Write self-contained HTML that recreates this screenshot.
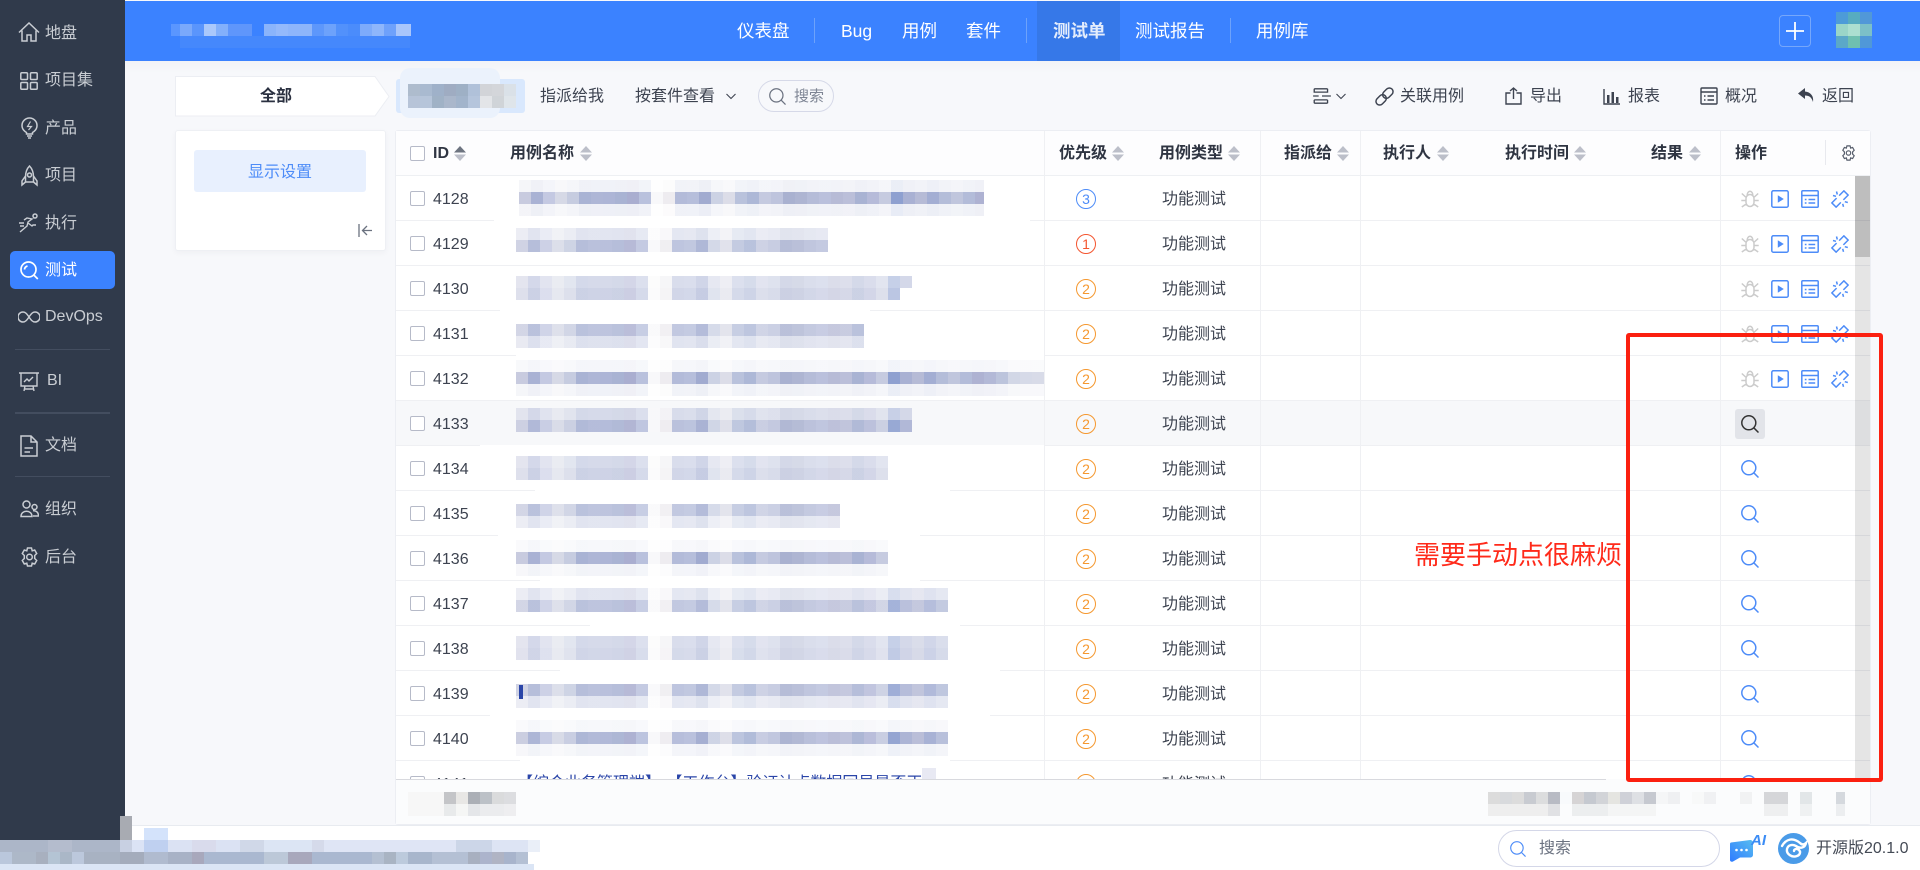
<!DOCTYPE html>
<html lang="zh-CN"><head><meta charset="utf-8"><title>测试单</title>
<style>
*{box-sizing:border-box}
html,body{margin:0;padding:0;width:1920px;height:870px;overflow:hidden;background:#f7f8fb;font-family:"Liberation Sans","Noto Sans CJK SC",sans-serif;font-size:16px;color:#3d4350}
.t{position:absolute;white-space:nowrap;line-height:20px;height:20px}
.a{position:absolute}
.s{color:#c9cdd3;left:45px}
.n{color:#fff;font-size:17.5px;top:21px}
.h{font-weight:700;color:#2f3542;top:144px}
.m{position:absolute;height:12px;background-image:linear-gradient(90deg,#c8cbdf 0 12px,#a9b2d4 0 24px,#c4c9e2 0 36px,#d6d9e6 0 48px,#c6cce0 0 60px,#a9b3d4 0 72px,#aeb6d6 0 84px,#adb5d6 0 96px,#a9b3d3 0 108px,#aaaed0 0 120px,#b9c1dd 0 132px,#f8f8fa 0 144px,#eeecf0 0 156px,#b3bbd9 0 168px,#b6bedb 0 180px,#a1abd0 0 192px,#ccd2e4 0 204px,#dcdde8 0 216px,#b9c2dc 0 228px,#adb8d7 0 240px,#c5cae0 0 252px,#bec4dd 0 264px,#a9b1d0 0 276px,#aeb5d2 0 288px,#b5bcd8 0 300px,#bac0dc 0 312px,#b7bbd6 0 324px,#bbbfd9 0 336px,#a9b3d3 0 348px,#b6bbd9 0 360px,#c6cbe0 0 372px,#8ea0d0 0 384px,#a9b1d3 0 396px,#b6bbd6 0 408px,#a3aed3 0 420px,#b4bdd9 0 432px,#c0c6dd 0 444px,#b3bcd9 0 456px,#aeb2d2 0 468px,#b3b9d7 0 480px,#bcc4dc 0 492px,#d2d7e6 0 504px,#d6dae8 0 516px,#d8dbe8 0 528px)}
.row{position:absolute;left:396px;width:1474px;height:45px;border-bottom:1px solid #eff0f3}
.cb{position:absolute;left:14px;top:15px;width:15px;height:15px;border:1px solid #b6bac8;border-radius:2px;background:#fff}
.id{position:absolute;left:37px;top:14px;line-height:20px;color:#3d4350}
.p{position:absolute;left:680px;top:13px;width:20px;height:20px;border-radius:50%;border:1px solid #f5982f;color:#f5982f;font-size:14px;line-height:18px;text-align:center;font-family:"Liberation Sans",sans-serif}
.ty{position:absolute;left:766px;top:14px;line-height:20px;color:#3d4350}
.ic{position:absolute;top:14px;width:18px;height:18px;fill:none;stroke:#4d8cf8;stroke-width:1.5}
.ib{stroke:#cbcbcb}
.q{position:absolute;left:1345px;top:14px;width:18px;height:18px;fill:none;stroke:#4d8cf8;stroke-width:1.5}
.ln{position:absolute;width:1px;background:#eff0f3}
.w{position:absolute;height:1px;background:#fff}
.tool{fill:none;stroke:#3d4350;stroke-width:1.4;position:absolute;width:18px;height:18px;top:87px}
.side{fill:none;stroke:#c9cdd3;stroke-width:1.5;position:absolute}
</style></head><body>

<svg width="0" height="0" style="position:absolute">
<defs>
<symbol id="bug" viewBox="0 0 18 18"><path d="M5 8.500a4 4 0 0 1 8 0v4a4 4 0 0 1-8 0zM6.200 5.300a2.800 4 0 0 1 5.600 0M.8 3.500l4.400 4M17.200 3.500l-4.400 4M.3 10.500H5M17.700 10.500H13M.8 17l4.400-3M17.200 17l-4.400-3"/></symbol>
<symbol id="play" viewBox="0 0 18 18"><rect x=".8" y=".8" width="16.400" height="16.400" rx="1.500"/><path d="M6.800 5.300L12.800 9l-6 3.700z" fill="#4d8cf8" stroke="none"/></symbol>
<symbol id="list" viewBox="0 0 18 18"><rect x=".8" y=".8" width="16.400" height="16.400" rx="1"/><path d="M.8 5.500h16.400M3.800 9.500h1.700M7.500 9.500h6.700M3.800 13h1.700M7.500 13h6.700"/></symbol>
<symbol id="unl" viewBox="0 0 18 18"><g transform="rotate(-45 9 9)"><path d="M7.200 6H.5v6h6.700M10.800 6h6.700v6h-6.700"/></g><path d="M2 5.500l3 .8M5.500 1.500l.8 3M12.500 16.800l-.8-3M16.800 12.500l-3-.8"/></symbol>
<symbol id="mag" viewBox="0 0 18 18"><circle cx="7.800" cy="7.800" r="7"/><path d="M12.800 12.800L17.500 17.500"/></symbol>
<symbol id="sort" viewBox="0 0 12 15"><path d="M6 0l6 6.500H0z"/><path d="M0 8.500h12L6 15z"/></symbol>
</defs>
</svg>

<!-- Top nav -->
<div class="a" style="left:125px;top:1px;width:1795px;height:60px;background:#3b82ff"></div>
<div class="a" style="left:125px;top:61px;width:1795px;height:12px;background:linear-gradient(#f2f3f7,#f7f8fb)"></div>
<div class="a" style="left:171px;top:24px;width:240px;height:12px;background:linear-gradient(90deg,#5a96ff 0 9px,#7aa9fb 0 21px,#5a95fc 0 33px,#aac8fb 0 45px,#83b0fb 0 57px,#5f96fb 0 81px,#3b82ff 0 93px,#8ab4fb 0 105px,#94b9fb 0 117px,#8eb5fb 0 129px,#8db5fa 0 141px,#5d97fb 0 153px,#6da2fb 0 165px,#5291fb 0 177px,#4b8cfb 0 189px,#7dabfb 0 201px,#8eb6fb 0 213px,#6ea1fb 0 225px,#a9c6fb 0 240px)"></div>
<div class="a" style="left:180px;top:36px;width:230px;height:12px;background:#4588fc"></div>
<div class="a" style="left:1037px;top:1px;width:83px;height:60px;background:#3678e8"></div>
<div class="a" style="left:814px;top:18px;width:1px;height:25px;background:#6da2fb"></div>
<div class="a" style="left:1026px;top:18px;width:1px;height:25px;background:#6da2fb"></div>
<div class="a" style="left:1230px;top:18px;width:1px;height:25px;background:#6da2fb"></div>
<div class="t n" style="left:737px">仪表盘</div>
<div class="t n" style="left:841px">Bug</div>
<div class="t n" style="left:902px">用例</div>
<div class="t n" style="left:966px">套件</div>
<div class="t n" style="left:1053px;font-weight:700;color:#e4edfc">测试单</div>
<div class="t n" style="left:1135px">测试报告</div>
<div class="t n" style="left:1256px">用例库</div>
<div class="a" style="left:1779px;top:15px;width:32px;height:32px;border:1px solid #76a7fb;border-radius:4px"></div>
<svg class="a" style="left:1786px;top:22px" width="18" height="18"><path d="M9 0v18M0 9h18" stroke="#fff" stroke-width="1.800"/></svg>
<div class="a" style="left:1836px;top:12px;width:36px;height:12px;background:linear-gradient(90deg,#4d9bd8 0 12px,#57acc0 0 24px,#5198d8 0 36px)"></div>
<div class="a" style="left:1836px;top:24px;width:36px;height:12px;background:linear-gradient(90deg,#9ad5c8 0 12px,#acdfd0 0 24px,#7cc0c8 0 36px)"></div>
<div class="a" style="left:1836px;top:36px;width:36px;height:12px;background:linear-gradient(90deg,#5ba8c8 0 12px,#6fc0b0 0 24px,#5098d8 0 36px)"></div>

<!-- Sidebar -->
<div class="a" style="left:0;top:0;width:125px;height:870px;background:#303a4b"></div>
<div class="a" style="left:10px;top:251px;width:105px;height:38px;background:#3b82ff;border-radius:5px"></div>
<div class="a" style="left:15px;top:349px;width:95px;height:1px;background:#434d5f"></div>
<div class="a" style="left:15px;top:412px;width:95px;height:2px;background:#434d5f"></div>
<div class="a" style="left:15px;top:476px;width:95px;height:1px;background:#434d5f"></div>
<svg class="side" style="left:18px;top:22px" width="22" height="20" viewBox="0 0 22 20"><path d="M1 10.500L11 1l10 9.500M4 8.500V19h5v-6h4v6h5V8.500"/></svg>
<svg class="side" style="left:20px;top:72px" width="18" height="18" viewBox="0 0 18 18"><rect x=".8" y=".8" width="6.700" height="6.700" rx="1"/><rect x="10.500" y=".8" width="6.700" height="6.700" rx="1"/><rect x=".8" y="10.500" width="6.700" height="6.700" rx="1"/><rect x="10.500" y="10.500" width="6.700" height="6.700" rx="1"/></svg>
<svg class="side" style="left:21px;top:117px" width="17" height="22" viewBox="0 0 17 22"><path d="M5.500 15.500C3 14 1 11.500 1 8.500a7.500 7.500 0 0 1 15 0c0 3-2 5.500-4.500 7v1.500h-6zM6 19h5M7 21h3"/><path d="M9.500 4.500L6.500 9.500h4L7.500 13" stroke-width="1.200"/></svg>
<svg class="side" style="left:21px;top:165px" width="17" height="22" viewBox="0 0 17 22"><path d="M8.500 1C5.500 4 4.500 8 4.500 12v5h8v-5c0-4-1-8-4-11zM4.500 11L1 16v4l3.500-3M12.500 11l3.500 5v4l-3.500-3"/><circle cx="8.500" cy="10" r="2"/></svg>
<svg class="side" style="left:19px;top:213px" width="20" height="20" viewBox="0 0 20 20"><circle cx="16" cy="3" r="2"/><path d="M1 19l7-6 1-4 4-3-5-1-3 2M9 10l4 3 1-1 3 0M0 10h5M1 13h4" stroke-width="1.400"/></svg>
<svg class="a" style="left:20px;top:261px;fill:none;stroke:#fff;stroke-width:1.700" width="19" height="19" viewBox="0 0 19 19"><circle cx="8.500" cy="8.500" r="7.500"/><path d="M13.800 14l4 4M4.500 8.500a4 4 0 0 1 3-3.500"/></svg>
<svg class="side" style="left:18px;top:311px" width="22" height="12" viewBox="0 0 22 12"><path d="M11 6C9 3 7.500 1 5 1a5 5 0 0 0 0 10c2.500 0 4-2 6-5s3.500-5 6-5a5 5 0 0 1 0 10c-2.500 0-4-2-6-5z"/></svg>
<svg class="side" style="left:19px;top:372px" width="20" height="20" viewBox="0 0 20 20"><path d="M0 1h20M2 1v13h16V1M6 14l-1 5M14 14l1 5M5 17h10M5 10l3-3 2 2 4-4" stroke-width="1.400"/></svg>
<svg class="side" style="left:20px;top:435px" width="18" height="22" viewBox="0 0 18 22"><path d="M1 1h10l6 6v14H1zM11 1v6h6M4.500 13H13M4.500 17H10"/></svg>
<svg class="side" style="left:20px;top:500px" width="19" height="18" viewBox="0 0 19 18"><circle cx="6.500" cy="4.500" r="3.500"/><circle cx="14.500" cy="7" r="2.500"/><path d="M1 16.500c0-7 11-7 11 0zM13 10.800c3-.5 5.500 1.500 5.500 5.200H13"/></svg>
<svg class="side" style="left:20px;top:547px" width="19" height="20" viewBox="0 0 19 20"><path d="M7.500 1h4l.7 2.800 2.500-.8 2 3.500-2 2v3l2 2-2 3.500-2.500-.8-.7 2.800h-4l-.7-2.800-2.500.8-2-3.500 2-2v-3l-2-2 2-3.500 2.500.8z"/><circle cx="9.500" cy="10" r="2.800"/></svg>
<div class="t s" style="top:24px">地盘</div>
<div class="t s" style="top:71px">项目集</div>
<div class="t s" style="top:119px">产品</div>
<div class="t s" style="top:166px">项目</div>
<div class="t s" style="top:214px">执行</div>
<div class="t s" style="top:261px;color:#fff">测试</div>
<div class="t s" style="top:307px">DevOps</div>
<div class="t s" style="top:371px;left:47px">BI</div>
<div class="t s" style="top:436px">文档</div>
<div class="t s" style="top:500px">组织</div>
<div class="t s" style="top:548px">后台</div>

<!-- Breadcrumb -->
<svg class="a" style="left:175px;top:76px" width="215" height="41"><path d="M.5.500H200L214 20.500 200 40H.5z" fill="#fff" stroke="#eceef3"/></svg>
<div class="t" style="left:260px;top:87px;font-weight:700;color:#2a3040">全部</div>
<div class="a" style="left:396px;top:79px;width:129px;height:34px;background:#d9e8fd;border-radius:3px"></div>
<div class="a" style="left:400px;top:68px;width:100px;height:50px;background:#ebf2fc;border-radius:10px"></div>
<div class="a" style="left:408px;top:84px;width:108px;height:12px;background:linear-gradient(90deg,#aebccd 0 12px,#a9bad0 0 24px,#9fb1c9 0 36px,#9facc2 0 48px,#9eb0c5 0 60px,#b0c1d9 0 72px,#d2d4d8 0 84px,#d4d6da 0 96px,#dae1e8 0 108px)"></div>
<div class="a" style="left:408px;top:96px;width:108px;height:12px;background:linear-gradient(90deg,#b7c4d8 0 12px,#b6c5da 0 24px,#a0b2c6 0 36px,#aab7cb 0 48px,#a2b4cb 0 60px,#b5c5dc 0 72px,#e3e5e8 0 84px,#d0d4d8 0 96px,#dfe5ea 0 108px)"></div>
<div class="t" style="left:540px;top:87px">指派给我</div>
<div class="t" style="left:635px;top:87px">按套件查看</div>
<svg class="a" style="left:726px;top:93px" width="10" height="7"><path d="M.5 1L5 5.500 9.500 1" fill="none" stroke="#3d4350" stroke-width="1.100"/></svg>
<div class="a" style="left:758px;top:80px;width:76px;height:32px;border:1px solid #d6d9e8;border-radius:16px"></div>
<svg class="a" style="left:769px;top:88px;fill:none;stroke:#6b7280;stroke-width:1.300" width="17" height="17"><use href="#mag"/></svg>
<div class="t" style="left:794px;top:87px;font-size:15px;color:#7e8594">搜索</div>

<!-- Right toolbar -->
<svg class="tool" style="left:1312px;top:86px;width:20px;height:20px" viewBox="0 0 18 18"><path d="M2 2.500h12M2 2.500v3h12v-3M1 9h5M9 9h8M2 15.500h12M2 12.500v3M14 12.500v3M2 12.500h12" stroke-width="1.200"/></svg>
<svg class="a" style="left:1336px;top:93px" width="10" height="7"><path d="M.5 1L5 5.500 9.500 1" fill="none" stroke="#3d4350" stroke-width="1.100"/></svg>
<svg class="tool" style="left:1375px;width:19px;height:19px" viewBox="0 0 18 18"><g transform="rotate(-45 9 9)"><rect x="-1" y="5.500" width="11" height="7" rx="3.500"/><rect x="8" y="5.500" width="11" height="7" rx="3.500"/></g></svg>
<div class="t" style="left:1400px;top:87px">关联用例</div>
<svg class="tool" style="left:1505px" viewBox="0 0 18 18"><path d="M5.500 6H1v11h15V6h-4.500M8.500 12V1M5 4l3.500-3L12 4"/></svg>
<div class="t" style="left:1530px;top:87px">导出</div>
<svg class="tool" style="left:1603px" viewBox="0 0 18 18"><path d="M1 2v15h16" stroke-width="1.400"/><path d="M4 8h2.500v8H4zM8.500 5H11v11H8.500zM13 10h2.500v6H13z" fill="#3d4350" stroke="none"/></svg>
<div class="t" style="left:1628px;top:87px">报表</div>
<svg class="tool" style="left:1700px" viewBox="0 0 18 18"><rect x="1" y="1" width="16" height="16" rx="1"/><path d="M1 5h16M4 9h1.500M7.500 9H14M4 13h1.500M7.500 13H14"/></svg>
<div class="t" style="left:1725px;top:87px">概况</div>
<svg class="a" style="left:1798px;top:87px" width="17" height="17" viewBox="0 0 17 17"><path d="M7 1L0 6.500 7 12V8.500c4 0 6.500 1.500 8 6.500 1-6-2.500-10-8-10.500z" fill="#3d4350"/></svg>
<div class="t" style="left:1822px;top:87px">返回</div>

<!-- Side panel -->
<div class="a" style="left:175px;top:130px;width:211px;height:121px;background:#fff;border:1px solid #eef0f4;border-radius:3px;box-shadow:0 2px 6px rgba(40,50,80,.04)"></div>
<div class="a" style="left:194px;top:150px;width:172px;height:42px;background:#e8f0fe;border-radius:3px"></div>
<div class="t" style="left:248px;top:163px;color:#4d8cf8">显示设置</div>
<svg class="a" style="left:358px;top:224px" width="15" height="13"><path d="M1 0v13M14 6.500H5M9 2L4.500 6.500 9 11" fill="none" stroke="#6b7280" stroke-width="1.300"/></svg>

<!-- Table -->
<div class="a" style="left:395px;top:130px;width:1476px;height:695px;background:#fff;border:1px solid #eceef3;border-radius:3px"></div>
<div class="a" style="left:396px;top:131px;width:1474px;height:45px;background:#fdfdfe;border-bottom:1px solid #eef0f3"></div>
<div class="a" style="left:410px;top:146px;width:15px;height:15px;border:1px solid #b6bac8;border-radius:2px;background:#fff"></div>
<div class="t h" style="left:433px">ID</div>
<svg class="a" style="left:454px;top:146px" width="12" height="15" viewBox="0 0 12 15"><path d="M6 0l6 6.500H0z" fill="#6d7480"/><path d="M0 8.500h12L6 15z" fill="#bcbfc9"/></svg>
<div class="t h" style="left:510px">用例名称</div>
<svg class="a" style="left:580px;top:146px;fill:#bcbfc9" width="12" height="15"><use href="#sort"/></svg>
<div class="t h" style="left:1059px">优先级</div>
<svg class="a" style="left:1112px;top:146px;fill:#bcbfc9" width="12" height="15"><use href="#sort"/></svg>
<div class="t h" style="left:1159px">用例类型</div>
<svg class="a" style="left:1228px;top:146px;fill:#bcbfc9" width="12" height="15"><use href="#sort"/></svg>
<div class="t h" style="left:1284px">指派给</div>
<svg class="a" style="left:1337px;top:146px;fill:#bcbfc9" width="12" height="15"><use href="#sort"/></svg>
<div class="t h" style="left:1383px">执行人</div>
<svg class="a" style="left:1437px;top:146px;fill:#bcbfc9" width="12" height="15"><use href="#sort"/></svg>
<div class="t h" style="left:1505px">执行时间</div>
<svg class="a" style="left:1574px;top:146px;fill:#bcbfc9" width="12" height="15"><use href="#sort"/></svg>
<div class="t h" style="left:1651px">结果</div>
<svg class="a" style="left:1689px;top:146px;fill:#bcbfc9" width="12" height="15"><use href="#sort"/></svg>
<div class="t h" style="left:1735px">操作</div>
<div class="a" style="left:1825px;top:140px;width:1px;height:25px;background:#e8e9ee"></div>
<svg class="a" style="left:1841px;top:145px" width="15" height="16" viewBox="0 0 19 20"><path d="M7.500 1h4l.7 2.800 2.500-.8 2 3.500-2 2v3l2 2-2 3.500-2.500-.8-.7 2.800h-4l-.7-2.800-2.500.8-2-3.500 2-2v-3l-2-2 2-3.500 2.500.8z" fill="none" stroke="#555c6a" stroke-width="1.500"/><circle cx="9.500" cy="10" r="2.800" fill="none" stroke="#555c6a" stroke-width="1.500"/></svg>

<div class="a" style="left:396px;top:176px;width:1474px;height:603px;overflow:hidden">
<div class="row" style="left:0;top:0"><div class="cb"></div><div class="id">4128</div><div class="p" style="color:#4d8cf8;border-color:#4d8cf8">3</div><div class="ty">功能测试</div>
<svg class="ic ib" style="left:1345px"><use href="#bug"/></svg><svg class="ic" style="left:1375px"><use href="#play"/></svg><svg class="ic" style="left:1405px"><use href="#list"/></svg><svg class="ic" style="left:1435px"><use href="#unl"/></svg></div>
<div class="row" style="left:0;top:45px"><div class="cb"></div><div class="id">4129</div><div class="p" style="color:#f4552f;border-color:#f4552f">1</div><div class="ty">功能测试</div>
<svg class="ic ib" style="left:1345px"><use href="#bug"/></svg><svg class="ic" style="left:1375px"><use href="#play"/></svg><svg class="ic" style="left:1405px"><use href="#list"/></svg><svg class="ic" style="left:1435px"><use href="#unl"/></svg></div>
<div class="row" style="left:0;top:90px"><div class="cb"></div><div class="id">4130</div><div class="p">2</div><div class="ty">功能测试</div>
<svg class="ic ib" style="left:1345px"><use href="#bug"/></svg><svg class="ic" style="left:1375px"><use href="#play"/></svg><svg class="ic" style="left:1405px"><use href="#list"/></svg><svg class="ic" style="left:1435px"><use href="#unl"/></svg></div>
<div class="row" style="left:0;top:135px"><div class="cb"></div><div class="id">4131</div><div class="p">2</div><div class="ty">功能测试</div>
<svg class="ic ib" style="left:1345px"><use href="#bug"/></svg><svg class="ic" style="left:1375px"><use href="#play"/></svg><svg class="ic" style="left:1405px"><use href="#list"/></svg><svg class="ic" style="left:1435px"><use href="#unl"/></svg></div>
<div class="row" style="left:0;top:180px"><div class="cb"></div><div class="id">4132</div><div class="p">2</div><div class="ty">功能测试</div>
<svg class="ic ib" style="left:1345px"><use href="#bug"/></svg><svg class="ic" style="left:1375px"><use href="#play"/></svg><svg class="ic" style="left:1405px"><use href="#list"/></svg><svg class="ic" style="left:1435px"><use href="#unl"/></svg></div>
<div class="row" style="left:0;top:225px;background:#f7f8fa"><div class="cb"></div><div class="id">4133</div><div class="p">2</div><div class="ty">功能测试</div>
<div class="a" style="left:1339px;top:8px;width:30px;height:30px;background:#e2e4e9;border-radius:3px"></div><svg class="q" style="stroke:#333"><use href="#mag"/></svg></div>
<div class="row" style="left:0;top:270px"><div class="cb"></div><div class="id">4134</div><div class="p">2</div><div class="ty">功能测试</div><svg class="q"><use href="#mag"/></svg></div>
<div class="row" style="left:0;top:315px"><div class="cb"></div><div class="id">4135</div><div class="p">2</div><div class="ty">功能测试</div><svg class="q"><use href="#mag"/></svg></div>
<div class="row" style="left:0;top:360px"><div class="cb"></div><div class="id">4136</div><div class="p">2</div><div class="ty">功能测试</div><svg class="q"><use href="#mag"/></svg></div>
<div class="row" style="left:0;top:405px"><div class="cb"></div><div class="id">4137</div><div class="p">2</div><div class="ty">功能测试</div><svg class="q"><use href="#mag"/></svg></div>
<div class="row" style="left:0;top:450px"><div class="cb"></div><div class="id">4138</div><div class="p">2</div><div class="ty">功能测试</div><svg class="q"><use href="#mag"/></svg></div>
<div class="row" style="left:0;top:495px"><div class="cb"></div><div class="id">4139</div><div class="p">2</div><div class="ty">功能测试</div><svg class="q"><use href="#mag"/></svg></div>
<div class="row" style="left:0;top:540px"><div class="cb"></div><div class="id">4140</div><div class="p">2</div><div class="ty">功能测试</div><svg class="q"><use href="#mag"/></svg></div>
<div class="row" style="left:0;top:585px"><div class="cb"></div><div class="id">4141</div><div class="p">2</div><div class="ty">功能测试</div><svg class="q"><use href="#mag"/></svg>
<div class="t" style="left:121px;top:13px;color:#2a45a8">【综合业务管理端】-【工作台】验证计点数据回显是否正</div></div>
</div>
<div class="a" style="left:922px;top:768px;width:14px;height:11px;background:#e8e9f3"></div>

<!-- Smudges over row lines -->
<div class="w" style="left:494px;top:220px;width:536px"></div>
<div class="w" style="left:500px;top:310px;width:370px"></div>
<div class="w" style="left:516px;top:355px;width:528px"></div>
<div class="w" style="left:480px;top:445px;width:564px"></div>
<div class="w" style="left:535px;top:490px;width:415px"></div>
<div class="w" style="left:498px;top:535px;width:422px"></div>
<div class="w" style="left:540px;top:580px;width:380px"></div>
<div class="w" style="left:590px;top:625px;width:370px"></div>
<div class="w" style="left:560px;top:670px;width:440px"></div>
<div class="w" style="left:490px;top:715px;width:500px"></div>
<div class="w" style="left:520px;top:760px;width:430px"></div>

<!-- Column lines -->
<div class="ln" style="left:1044px;top:131px;height:648px"></div>
<div class="ln" style="left:1260px;top:131px;height:648px"></div>
<div class="ln" style="left:1360px;top:131px;height:648px"></div>
<div class="ln" style="left:1720px;top:131px;height:648px"></div>

<!-- Mosaic blocks over names -->
<div class="m" style="left:519px;top:180px;width:465px;opacity:.18"></div>
<div class="m" style="left:519px;top:192px;width:465px"></div>
<div class="m" style="left:519px;top:204px;width:465px;opacity:.2"></div>
<div class="m" style="left:516px;top:228px;width:312px;opacity:.35"></div>
<div class="m" style="left:516px;top:240px;width:312px;opacity:.85"></div>
<div class="m" style="left:516px;top:276px;width:396px;opacity:.5"></div>
<div class="m" style="left:516px;top:288px;width:384px;opacity:.6"></div>
<div class="m" style="left:516px;top:324px;width:348px;opacity:.8"></div>
<div class="m" style="left:516px;top:336px;width:348px;opacity:.4"></div>
<div class="m" style="left:516px;top:360px;width:528px;opacity:.12"></div>
<div class="m" style="left:516px;top:372px;width:528px"></div>
<div class="m" style="left:516px;top:384px;width:528px;opacity:.18"></div>
<div class="m" style="left:516px;top:408px;width:396px;opacity:.45"></div>
<div class="m" style="left:516px;top:420px;width:396px;opacity:.9"></div>
<div class="m" style="left:516px;top:456px;width:372px;opacity:.5"></div>
<div class="m" style="left:516px;top:468px;width:372px;opacity:.6"></div>
<div class="m" style="left:516px;top:504px;width:324px;opacity:.8"></div>
<div class="m" style="left:516px;top:516px;width:324px;opacity:.35"></div>
<div class="m" style="left:516px;top:540px;width:372px;opacity:.1"></div>
<div class="m" style="left:516px;top:552px;width:372px"></div>
<div class="m" style="left:516px;top:564px;width:372px;opacity:.15"></div>
<div class="m" style="left:516px;top:588px;width:432px;opacity:.35"></div>
<div class="m" style="left:516px;top:600px;width:432px;opacity:.8"></div>
<div class="m" style="left:516px;top:636px;width:432px;opacity:.5"></div>
<div class="m" style="left:516px;top:648px;width:432px;opacity:.55"></div>
<div class="m" style="left:516px;top:684px;width:432px;opacity:.85"></div>
<div class="m" style="left:516px;top:696px;width:432px;opacity:.35"></div>
<div class="a" style="left:519px;top:685px;width:4px;height:14px;background:#2a45a8"></div>
<div class="m" style="left:516px;top:720px;width:432px;opacity:.1"></div>
<div class="m" style="left:516px;top:732px;width:432px;opacity:.95"></div>
<div class="m" style="left:516px;top:744px;width:432px;opacity:.15"></div>

<!-- Scrollbar -->
<div class="a" style="left:1855px;top:176px;width:15px;height:603px;background:rgba(0,0,0,.1)"></div>
<div class="a" style="left:1855px;top:176px;width:15px;height:81px;background:rgba(0,0,0,.17)"></div>

<!-- Table footer -->
<div class="a" style="left:396px;top:779px;width:1474px;height:45px;background:#fbfcfd"></div>
<div class="a" style="left:396px;top:779px;width:1210px;height:1px;background:#d8d9de"></div>
<div class="a" style="left:411px;top:795px;width:15px;height:15px;border:1px solid #c6c9d2;border-radius:2px"></div>
<div class="a" style="left:408px;top:792px;width:36px;height:24px;background:#f7f7f7"></div>
<div class="a" style="left:444px;top:792px;width:72px;height:12px;background:linear-gradient(90deg,#c4c5c8 0 12px,#e8e7e5 0 24px,#abafb6 0 36px,#bcc1c7 0 48px,#dadbdc 0 60px,#dcdde0 0 72px)"></div>
<div class="a" style="left:444px;top:804px;width:72px;height:12px;background:linear-gradient(90deg,#e8eaeb 0 12px,#f5f6f5 0 24px,#e4e6e9 0 36px,#ebecee 0 60px,#eeeef0 0 72px)"></div>
<div class="a" style="left:1488px;top:792px;width:357px;height:12px;background:linear-gradient(90deg,#dcdcdc 0 12px,#d8dadd 0 24px,#dcdcdc 0 36px,#c8cbd1 0 48px,#dcddde 0 60px,#b8bbc4 0 72px,#f8fafc 0 84px,#d6d4d5 0 96px,#c5c9d0 0 108px,#d2d4d8 0 120px,#e5e5e1 0 132px,#cfd1d8 0 144px,#dee0e4 0 156px,#c6c9d0 0 168px,#f5f6f7 0 180px,#eff0f2 0 192px,#fbfcfd 0 204px,#f8f9f9 0 216px,#f0f1f3 0 228px,#fbfcfd 0 252px,#f1f2f3 0 264px,#fbfcfd 0 276px,#d5d6d9 0 300px,#fbfcfd 0 312px,#e2e6e8 0 324px,#fbfcfd 0 348px,#d5d9de 0 357px)"></div>
<div class="a" style="left:1488px;top:804px;width:357px;height:12px;background:linear-gradient(90deg,#eeeeee 0 60px,#e0e1e4 0 72px,#fbfcfd 0 84px,#eceeef 0 120px,#f4f5f5 0 168px,#fbfcfd 0 276px,#eeeff0 0 300px,#fbfcfd 0 312px,#eff1f2 0 324px,#fbfcfd 0 348px,#eceef0 0 357px)"></div>

<!-- Bottom bar -->
<div class="a" style="left:125px;top:825px;width:1795px;height:45px;background:#fff;border-top:1px solid #e8ebf0"></div>
<div class="a" style="left:120px;top:816px;width:12px;height:24px;background:#a8abb2"></div>
<div class="a" style="left:144px;top:828px;width:24px;height:12px;background:#d4e3fb"></div>
<div class="a" style="left:0;top:840px;width:540px;height:12px;background:linear-gradient(90deg,#acb6c8 0 48px,#b4bccd 0 72px,#acb6c8 0 120px,#c8d0e2 0 132px,#dbe3f5 0 144px,#bfd0f0 0 168px,#dbe2f3 0 192px,#d9dbec 0 216px,#dbe2f3 0 240px,#d0d8e8 0 264px,#dce5f4 0 312px,#d5daea 0 324px,#dfe5f5 0 456px,#ccd6e8 0 492px,#dde4f4 0 528px,#eaeff8 0 540px)"></div>
<div class="a" style="left:0;top:852px;width:528px;height:12px;background:linear-gradient(90deg,#bac7dc 0 12px,#adb8c8 0 36px,#a8b0bf 0 48px,#b4c4d4 0 60px,#aab7c7 0 72px,#bcc8dc 0 84px,#a8b2c2 0 120px,#a4acbc 0 144px,#b0bbcf 0 168px,#a8b2c6 0 192px,#a8a8bc 0 204px,#aab8d0 0 264px,#bcc8d8 0 288px,#a8a8bc 0 312px,#aab8d0 0 372px,#b4c0d2 0 384px,#a9b4c3 0 396px,#bccadc 0 408px,#a8b6cc 0 432px,#b4c0d4 0 468px,#a8b0c0 0 480px,#acb4cc 0 492px,#b0b4c4 0 504px,#a8b4cc 0 516px,#b4c0d4 0 528px)"></div>
<div class="a" style="left:0;top:864px;width:534px;height:6px;background:#dbe5f5"></div>

<div class="a" style="left:1498px;top:830px;width:222px;height:37px;border:1px solid #d4d7e8;border-radius:19px;background:#fff"></div>
<svg class="a" style="left:1510px;top:841px;fill:none;stroke:#4d8cf8;stroke-width:1.300" width="16" height="16"><use href="#mag"/></svg>
<div class="t" style="left:1539px;top:839px;color:#6b7280">搜索</div>
<svg class="a" style="left:1729px;top:839px" width="26" height="24" viewBox="0 0 26 24"><defs><linearGradient id="g" x1="0" y1="1" x2="1" y2="0"><stop offset="0" stop-color="#2f7bff"/><stop offset="1" stop-color="#58bdf0"/></linearGradient></defs><path d="M2 3.500L21 1c1.500 0 3 1 3 2.500V16c0 1.500-1.500 2.500-3 2.500H11L4 22.500c-1.500.7-3 0-3-1.500V5c0-.8.3-1.300 1-1.500z" fill="url(#g)"/><circle cx="7.500" cy="11" r="1.300" fill="#fff"/><circle cx="12.500" cy="11" r="1.300" fill="#fff"/><circle cx="17.500" cy="11" r="1.300" fill="#fff"/></svg>
<div class="t" style="left:1751px;top:833px;font-size:15px;font-weight:700;font-style:italic;color:#3b8cf5;line-height:16px;height:16px">AI</div>
<svg class="a" style="left:1778px;top:833px" width="31" height="31" viewBox="0 0 31 31"><circle cx="15.500" cy="15.500" r="15.500" fill="#4a9be8"/><path d="M4 13c4-7 11-9 18-3 2 2 4 2 6 0-1 5-6 6-10 3-4-2-8-1-9 3-1 5 5 9 10 7 3-1 4-4 2-6-2-2-5-1-5 1" fill="none" stroke="#fff" stroke-width="2.400" stroke-linecap="round"/></svg>
<div class="t" style="left:1816px;top:839px;color:#444a55">开源版20.1.0</div>

<!-- Annotation -->
<div class="a" style="left:1626px;top:333px;width:257px;height:449px;border:4px solid #fb2010;border-radius:3px"></div>
<div class="t" style="left:1414px;top:540px;font-size:26px;line-height:30px;height:30px;color:#ff2a1a;font-family:'Liberation Sans','Noto Sans CJK SC',sans-serif">需要手动点很麻烦</div>

</body></html>
